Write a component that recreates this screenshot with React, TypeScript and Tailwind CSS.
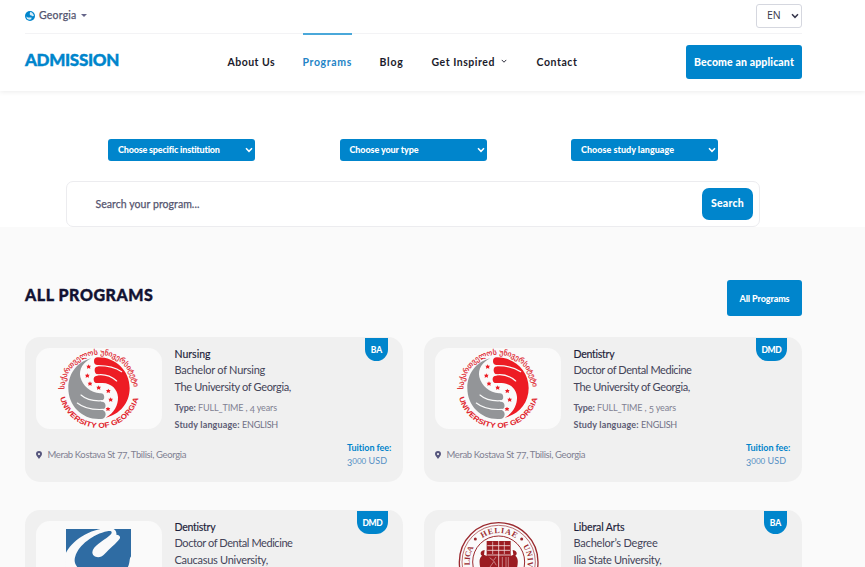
import { useLayoutEffect, useRef, type ReactNode } from "react";

/** A single line of text whose letter spacing is adjusted to fill a given width. */
function Fit({ w, className = "", children }: { w: number; className?: string; children: ReactNode }) {
  const ref = useRef<HTMLSpanElement>(null);
  useLayoutEffect(() => {
    const el = ref.current;
    if (!el) return;
    el.style.letterSpacing = "0px";
    const n = (el.textContent ?? "").length;
    el.style.letterSpacing = `${(w - el.getBoundingClientRect().width) / n}px`;
  }, [w]);
  return (
    <span ref={ref} className={`inline-block whitespace-pre ${className}`}>
      {children}
    </span>
  );
}

function Chevron({ className = "h-[6px] w-[8px]", stroke = 1.5 }: { className?: string; stroke?: number }) {
  return (
    <svg viewBox="0 0 8 6" className={className} fill="none" stroke="currentColor" strokeWidth={stroke}>
      <path d="M1 1.2 4 4.3 7 1.2" />
    </svg>
  );
}

function Star({ x, y }: { x: number; y: number }) {
  return (
    <path
      transform={`translate(${x} ${y})`}
      fill="#ed1c24"
      d="M0-7 2-3 7-3 4 1 5 6 0 4-5 6-4 1-7-3-2-3Z"
    />
  );
}

function GeorgiaLogo() {
  const stars = [
    [206, 111], [202, 138], [210, 162], [236, 174], [265, 184], [272, 210], [264, 238],
  ];
  return (
    <svg viewBox="48 55 378 243" className="h-[81px] w-[126px]">
      <path
        fill="#939598"
        d="M214 86C172 96 145 132 145 175C145 228 185 268 236 268H243A12 12 0 0 0 243 240L246 239A11 11 0 0 0 244 216L243 213A11 11 0 0 0 240 191C212 189 188 169 181 142C176 119 190 97 214 86Z"
      />
      <path
        fill="#ed1c24"
        d="M234 83C288 83 329 124 329 175C329 221 299 254 257 264C282 251 295 226 294 202C292 178 274 161 248 160H233A11 11 0 0 1 231 138L237 134A12 12 0 0 1 235 110L233 106A11 11 0 0 1 234 83Z"
      />
      <g fill="none" stroke="#fafafa" strokeWidth="3.5" strokeLinecap="round">
        <path d="M228 108C258 107 284 112 305 126" />
        <path d="M230 136C255 132 273 139 290 154" />
        <path d="M183 196C200 211 220 215 247 213" />
        <path d="M172 220C193 237 217 241 250 239" />
      </g>
      {stars.map(([x, y]) => (
        <Star key={x} x={x} y={y} />
      ))}
      <path id="ug-top" d="M133 179A103 103 0 0 1 341 179" fill="none" />
      <path id="ug-bottom" d="M120 204A122 122 0 0 0 356 204" fill="none" />
      <text fill="#e0242c" stroke="#e0242c" strokeWidth="0.5" fontSize="22" fontFamily="DejaVu Sans, sans-serif">
        <textPath href="#ug-top" textLength="320" lengthAdjust="spacingAndGlyphs">
          საქართველოს უნივერსიტეტი
        </textPath>
      </text>
      <text fill="#e0242c" fontSize="22" fontWeight="700" fontFamily="Liberation Sans, Arial, sans-serif">
        <textPath href="#ug-bottom" textLength="318" lengthAdjust="spacingAndGlyphs">
          UNIVERSITY OF GEORGIA
        </textPath>
      </text>
    </svg>
  );
}

function CaucasusLogo() {
  return (
    <svg viewBox="48 63 378 243" className="h-[81px] w-[126px]">
      <path fill="#2f6ca3" d="M138 87H333V240H138Z" />
      <path
        fill="#fafafa"
        d="M136 163C154 121 210 86 266 84C282 84 291 92 289 104C297 104 303 110 299 116C289 130 269 145 253 163C241 177 217 173 217 157C218 138 249 123 267 108C281 97 275 91 262 94C220 102 176 136 166 169C161 184 165 194 176 206L160 240H136Z"
      />
      <path fill="#fafafa" d="M334 168C326 176 332 188 322 204V242H336Z" />
    </svg>
  );
}

function IliaLogo() {
  return (
    <svg viewBox="255 63 378 243" className="h-[81px] w-[126px]">
      <g fill="none" stroke="#9b2a2f">
        <circle cx="446" cy="186" r="118" strokeWidth="4" />
        <circle cx="446" cy="186" r="110" strokeWidth="2" />
        <circle cx="446" cy="186" r="78" strokeWidth="3" />
      </g>
      <path id="ilia-ring" d="M364 215A87 87 0 1 1 528 215" fill="none" />
      <g fill="#9b2a2f" fontSize="24" fontWeight="700" fontFamily="Liberation Serif, serif">
        <text>
          <textPath href="#ilia-ring" startOffset="20" textLength="56">LICA</textPath>
        </text>
        <text>
          <textPath href="#ilia-ring" startOffset="114" textLength="106">HELIAE</textPath>
        </text>
        <text>
          <textPath href="#ilia-ring" startOffset="252" textLength="66">UNIV</textPath>
        </text>
        <circle cx="376" cy="117" r="4.5" />
        <circle cx="515" cy="117" r="4.5" />
      </g>
      <path
        fill="#9b1c22"
        d="M410 123H482V204H410ZM404 150C389 152 390 163 396 167C385 176 389 192 391 204H410V168L402 164ZM488 150C503 152 502 163 496 167C507 176 503 192 501 204H482V168L490 164Z"
      />
      <g fill="none" stroke="#f3dfe0" strokeWidth="2.5">
        <path d="M446 123V204M412 137H480M412 151H480M412 165H480" />
        <path d="M428 125V162M463 125V162" strokeWidth="2" />
        <path d="M419 173 430 182 438 171M420 201 432 184 439 196M457 171V201M468 171V201M475 171V201" strokeWidth="1.5" />
      </g>
    </svg>
  );
}

type Program = {
  title: string;
  titleW: number;
  degree: string;
  degreeW: number;
  school: string;
  schoolW: number;
  years: string;
  badge: string;
  logo: ReactNode;
};

const programs: Program[] = [
  { title: "Nursing", titleW: 36, degree: "Bachelor of Nursing", degreeW: 90.5, school: "The University of Georgia,", schoolW: 116.5, years: "4", badge: "BA", logo: <GeorgiaLogo /> },
  { title: "Dentistry", titleW: 41, degree: "Doctor of Dental Medicine", degreeW: 118, school: "The University of Georgia,", schoolW: 116.5, years: "5", badge: "DMD", logo: <GeorgiaLogo /> },
  { title: "Dentistry", titleW: 41, degree: "Doctor of Dental Medicine", degreeW: 118, school: "Caucasus University,", schoolW: 93.5, years: "5", badge: "DMD", logo: <CaucasusLogo /> },
  { title: "Liberal Arts", titleW: 51, degree: "Bachelor’s Degree", degreeW: 84, school: "Ilia State University,", schoolW: 88, years: "4", badge: "BA", logo: <IliaLogo /> },
];

function ProgramCard({ p }: { p: Program }) {
  return (
    <article className="relative h-[145px] rounded-[15px] bg-[#f0f0f0] px-[11px] pt-[11px]">
      <div className="flex h-[81px]">
        <div className="h-[81px] w-[126px] shrink-0 overflow-hidden rounded-[14px] bg-[#fafafa]">{p.logo}</div>
        <div className="ml-[12.5px] flex flex-col items-start text-[11px] leading-[16.5px] text-[#444459]">
          <Fit w={p.titleW} className="-mt-[2.5px] text-[10.5px] text-[#1d1d3a] [-webkit-text-stroke:0.15px]">{p.title}</Fit>
          <Fit w={p.degreeW}>{p.degree}</Fit>
          <Fit w={p.schoolW}>{p.school}</Fit>
          <div className="mt-[5px] flex text-[9px] text-[#808092]">
            <Fit w={23.5} className="font-bold text-[#5c5c74]">Type: </Fit>
            <Fit w={79}>
              FULL_TIME , <span className="relative top-[1.5px]">{p.years}</span> years
            </Fit>
          </div>
          <div className="flex text-[9px] text-[#707086]">
            <Fit w={67.5} className="font-bold text-[#5c5c74]">Study language: </Fit>
            <Fit w={36}>ENGLISH</Fit>
          </div>
        </div>
      </div>
      <div className="mt-[7px] flex items-start justify-between">
        <div className="mt-[12px] flex h-[14px] items-center text-[9.5px] text-[#808092]">
          <svg viewBox="0 0 6 8" className="mr-[5.5px] h-[8px] w-[6px]" fill="#55557d" fillRule="evenodd">
            <path d="M3 0a3 3 0 0 1 3 3C6 4.7 4 6.6 3 8 2 6.6 0 4.7 0 3a3 3 0 0 1 3-3Zm0 2a1.1 1.1 0 1 0 0 2.2A1.1 1.1 0 0 0 3 2Z" />
          </svg>
          <Fit w={138.5}>
            Merab Kostava St <span className="relative top-[1.5px]">77</span>, Tbilisi, Georgia
          </Fit>
        </div>
        <div className="mt-[6px] flex w-[45px] flex-col items-start text-[9px] leading-[13px] text-[#0084cb]">
          <Fit w={44.5} className="-mt-[1px] font-bold">Tuition fee:</Fit>
          <Fit w={40} className="text-[#558fc4]">
            <span className="relative top-[2px]">3</span>
            <span className="text-[8px]">000</span> USD
          </Fit>
        </div>
      </div>
      <div
        className={`absolute right-[15px] top-[1px] h-[23px] rounded-b-[12px] bg-[#0085cc] text-center text-[8.5px] font-black leading-[24px] text-white ${
          p.badge === "BA" ? "w-[23px]" : "w-[31px]"
        }`}
      >
        <Fit w={p.badge === "BA" ? 11.5 : 20}>{p.badge}</Fit>
      </div>
    </article>
  );
}

const filters = [
  { label: "Choose specific institution", w: 102 },
  { label: "Choose your type", w: 69 },
  { label: "Choose study language", w: 93 },
];

export default function App() {
  return (
    <div className="h-[567px] w-[865px] overflow-hidden bg-[#fafafa] font-['Lato','Open_Sans',sans-serif] text-[#1d1d3a]">
      <header className="relative h-[91px] bg-white pl-[25px] pr-[63px] shadow-[0_1px_5px_rgba(0,0,0,0.08)]">
        <div className="flex h-[34px] items-center justify-between border-b border-[#f3f3f5]">
          <div className="flex items-center pb-[2px] text-[10.5px] text-[#55556f] [-webkit-text-stroke:0.25px]">
            <svg viewBox="0 0 10 10" className="mr-[4px] h-[10px] w-[10px]">
              <circle cx="5" cy="5" r="5" fill="#0085cc" />
              <path d="M5.2 1 7 1.6 8.5 3.4 8.9 5 7 5.2 6.2 4.2 5 4.3 4.7 2.8ZM1.2 5.6 3 6.5 6.6 6.6 6.2 8.2 4.3 8.8 2.2 7.9Z" fill="#d5ecf8" />
            </svg>
            <Fit w={37.5}>Georgia</Fit>
            <span className="ml-[4px] border-x-[3.5px] border-t-[3.5px] border-x-transparent border-t-[#66668a]" />
          </div>
          <div className="mt-[-2px] flex h-[24px] w-[46px] items-center rounded-[3px] border border-[#d5d7df] pl-[10px] font-['Open_Sans',sans-serif] text-[10.5px] text-[#37374d]">
            <Fit w={13.5}>EN</Fit>
            <Chevron className="ml-[10px] h-[6px] w-[8px]" />
          </div>
        </div>
        <div className="flex h-[57px] items-start">
          <div className="w-[202.5px] pt-[16px] text-[17px] font-black leading-[20px] text-[#0085cc] [-webkit-text-stroke:0.4px]">
            <Fit w={94}>ADMISSION</Fit>
          </div>
          <nav className="-mt-[1px] flex text-[10.5px] font-bold leading-[16px] text-[#1b1b2b]">
            <div className="w-[75px] pt-[21px]"><Fit w={47.5}>About Us</Fit></div>
            <div className="mr-[27.5px] h-[40px] w-[49.5px] border-t-2 border-[#4aa8da] pt-[19px] text-[#2384c6]"><Fit w={49.5}>Programs</Fit></div>
            <div className="w-[52px] pt-[21px]"><Fit w={24}>Blog</Fit></div>
            <div className="flex w-[105px] pt-[21px]">
              <Fit w={63.5}>Get Inspired</Fit>
              <Chevron className="ml-[5.5px] mt-[5px] h-[4.5px] w-[6px]" stroke={1.2} />
            </div>
            <div className="pt-[21px]"><Fit w={41}>Contact</Fit></div>
          </nav>
          <button className="ml-auto mt-[11px] h-[34px] w-[116px] rounded-[3px] bg-[#0085cc] pt-[1px] text-[10.5px] font-black text-white">
            <Fit w={100}>Become an applicant</Fit>
          </button>
        </div>
      </header>

      <section className="h-[136px] bg-white pl-[66px] pt-[48px]">
        <div className="flex gap-[84.5px] pl-[42px]">
          {filters.map((f) => (
            <div key={f.label} className="flex h-[22px] w-[147px] items-center justify-between rounded-[3px] bg-[#0085cc] pl-[10px] pr-[2px] text-[9px] font-black text-white">
              <Fit w={f.w}>{f.label}</Fit>
              <Chevron />
            </div>
          ))}
        </div>
        <div className="mt-[20px] flex h-[46px] w-[694px] items-center justify-between rounded-[7px] border border-[#ececef] pl-[28.5px] pr-[6px] text-[10.5px] text-[#55556f]">
          <Fit w={104} className="pt-[2px] [-webkit-text-stroke:0.25px]">Search your program...</Fit>
          <button className="h-[32px] w-[51px] rounded-[7px] bg-[#0085cc] pb-[1px] text-[10.5px] font-black text-white">
            <Fit w={33}>Search</Fit>
          </button>
        </div>
      </section>

      <main className="pl-[25px] pr-[63px] pt-[53px]">
        <div className="flex h-[36px] items-center justify-between">
          <h1 className="pb-[7px] text-[16px] font-black leading-[20px] text-[#121232] [-webkit-text-stroke:0.4px]">
            <Fit w={128.5}>ALL PROGRAMS</Fit>
          </h1>
          <button className="h-[36px] w-[75px] rounded-[3px] bg-[#0085cc] pt-[1px] text-[9px] font-black text-white">
            <Fit w={50}>All Programs</Fit>
          </button>
        </div>
        <div className="mt-[21px] grid grid-cols-2 gap-x-[21px] gap-y-[28px]">
          {programs.map((p, i) => (
            <ProgramCard key={i} p={p} />
          ))}
        </div>
      </main>
    </div>
  );
}
